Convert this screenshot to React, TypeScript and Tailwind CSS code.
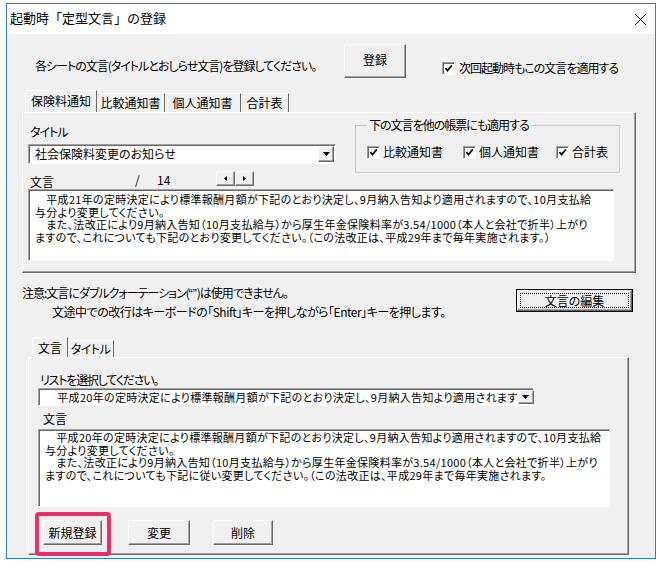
import React from 'react';

const raised =
  'border border-t-white border-l-white border-r-[#696969] border-b-[#696969] shadow-[inset_-1px_-1px_0_#a0a0a0] bg-[#f0f0f0]';
const sunken =
  'border border-t-[#a0a0a0] border-l-[#a0a0a0] border-r-white border-b-white shadow-[inset_1px_1px_0_#696969] bg-white';
const palt = "[font-feature-settings:'palt']";

const Check = () => (
  <span className={`w-[13px] h-[13px] flex items-center justify-center shrink-0 ${sunken}`}>
    <svg width="9" height="9" viewBox="0 0 9 9">
      <path d="M1.5 4 L3.5 6.5 L7.8 1.5" stroke="#000" strokeWidth="1.8" fill="none" />
    </svg>
  </span>
);

const DropBtn = () => (
  <span className={`w-[16px] h-full flex items-center justify-center shrink-0 ${raised}`}>
    <svg width="7" height="4" viewBox="0 0 7 4">
      <path d="M0 0h7L3.5 4z" fill="#000" />
    </svg>
  </span>
);

const Button = ({ label, className = '' }: { label: string; className?: string }) => (
  <div className={`flex items-center justify-center text-[12px] ${palt} ${raised} ${className}`}>{label}</div>
);

const upperText = [
  '\u3000平成21年の定時決定により標準報酬月額が下記のとおり決定し、9月納入告知より適用されますので、10月支払給',
  '与分より変更してください。',
  '\u3000また、法改正により9月納入告知（10月支払給与）から厚生年金保険料率が3.54/1000（本人と会社で折半）上がり',
  'ますので、これについても下記のとおり変更してください。（この法改正は、平成29年まで毎年実施されます。）',
];

const lowerText = [
  '\u3000平成20年の定時決定により標準報酬月額が下記のとおり決定し、9月納入告知より適用されますので、10月支払給',
  '与分より変更してください。',
  '\u3000また、法改正により9月納入告知（10月支払給与）から厚生年金保険料率が3.54/1000（本人と会社で折半）上がり',
  'ますので、これについても下記に従い変更してください。（この法改正は、平成29年まで毎年実施されます。',
];

const TextBox = ({ lines, className }: { lines: string[]; className: string }) => (
  <div className={`${sunken} ${className} pl-[6px] text-[11px] leading-[12.5px] tracking-[0.3px] ${palt} whitespace-nowrap overflow-hidden`}>
    {lines.map((l, i) => (
      <div key={i}>{l}</div>
    ))}
  </div>
);

export default function App() {
  return (
    <div className="w-[659px] h-[570px] bg-white pt-[3px] pl-[6px] font-['Noto_Sans_CJK_JP','Liberation_Sans',sans-serif] text-black">
      <div className="w-[650px] h-[556px] border border-[#2d7fd0] bg-[#f0f0f0] flex flex-col">
        {/* title bar */}
        <div className="h-[30px] bg-white flex items-center justify-between pl-[3px] pr-[9px] pb-[2px] shrink-0">
          <span className="text-[13px] leading-[16px]">起動時「定型文言」の登録</span>
          <svg width="11" height="11" viewBox="0 0 11 11" className="mt-[3px]">
            <path d="M0 0L11 11M11 0L0 11" stroke="#000" strokeWidth="1" />
          </svg>
        </div>

        {/* top row */}
        <div className="flex mt-[10px] h-[35px] text-[12px]">
          <div className={`ml-[28px] w-[309px] pt-[15px] leading-[14px] whitespace-nowrap tracking-[-1px] ${palt}`}>
            各シートの文言(タイトルとおしらせ文言)を登録してください。
          </div>
          <Button label="登録" className="w-[62px] h-[34px] pb-[3px]" />
          <div className={`ml-[36px] pt-[18px] flex items-start gap-[4px] leading-[14px] ${palt}`}>
            <Check />
            <span className="-mt-[1px] tracking-[-1px] whitespace-nowrap">次回起動時もこの文言を適用する</span>
          </div>
        </div>

        {/* upper tabs */}
        <div className="ml-[15px] mt-[11px] flex flex-col">
          <div className={`flex items-end ml-[3px] h-[22px] text-[12px] ${palt}`}>
            <div className="w-[72px] h-[22px] flex items-center justify-center border-l border-t border-white border-r border-r-[#696969] pb-[1px]">
              保険料通知
            </div>
            <div className="w-[68px] h-[19px] flex items-center justify-center border-r border-r-[#696969] border-t border-t-white">
              比較通知書
            </div>
            <div className="w-[76px] h-[19px] flex items-center justify-center border-r border-r-[#696969] border-t border-t-white">
              個人通知書
            </div>
            <div className="w-[48px] h-[19px] flex items-center justify-center border-r border-r-[#696969] border-t border-t-white">
              合計表
            </div>
          </div>
          <div className="w-[614px] h-[161px] border border-t-white border-l-white border-r-[#696969] border-b-[#696969] shadow-[inset_-1px_-1px_0_#a0a0a0] flex flex-col">
            <div className="flex h-[75px]">
              <div className={`ml-[5px] w-[308px] pt-[12px] flex flex-col text-[12px] ${palt}`}>
                <div className="h-[14px] leading-[14px] pl-[2px] tracking-[-1px]">タイトル</div>
                <div className={`mt-[5px] h-[20px] flex items-center ${sunken} p-[1px]`}>
                  <span className="flex-1 pl-[5px] leading-[16px]">社会保険料変更のお知らせ</span>
                  <DropBtn />
                </div>
                <div className="mt-[7px] h-[17px] flex items-center leading-[14px]">
                  <span className="pl-[2px] w-[107px] mt-[4px]">文言</span>
                  <span className="w-[22px]">/</span>
                  <span className="w-[59px]">14</span>
                  <div className="flex h-[15px] -mt-[2px]">
                    <span className={`w-[19px] h-full flex items-center justify-center ${raised}`}>
                      <svg width="3" height="5" viewBox="0 0 3 5">
                        <path d="M3 0v5L0 2.5z" fill="#000" />
                      </svg>
                    </span>
                    <span className={`w-[19px] h-full flex items-center justify-center ${raised}`}>
                      <svg width="3" height="5" viewBox="0 0 3 5">
                        <path d="M0 0v5L3 2.5z" fill="#000" />
                      </svg>
                    </span>
                  </div>
                </div>
              </div>
              <div className={`relative ml-[19px] mt-[12px] w-[265px] h-[48px] border border-[#c8c8c8] shadow-[1px_1px_0_white] text-[12px] ${palt}`}>
                <span className="absolute -top-[8px] left-[11px] px-[2px] bg-[#f0f0f0] leading-[14px] tracking-[-1px] whitespace-nowrap">
                  下の文言を他の帳票にも適用する
                </span>
                <div className="flex pt-[20px] pl-[11px] leading-[14px]">
                  <div className="w-[96px] flex items-start gap-[3px]">
                    <Check />
                    <span className="-mt-[1px]">比較通知書</span>
                  </div>
                  <div className="w-[93px] flex items-start gap-[3px]">
                    <Check />
                    <span className="-mt-[1px]">個人通知書</span>
                  </div>
                  <div className="flex items-start gap-[3px]">
                    <Check />
                    <span className="-mt-[1px]">合計表</span>
                  </div>
                </div>
              </div>
            </div>
            <TextBox lines={upperText} className="ml-[5px] mt-[1px] w-[586px] h-[72px] pt-[3px]" />
          </div>
        </div>

        {/* notes */}
        <div className={`flex mt-[11px] ml-[15px] text-[12px] ${palt}`}>
          <div className="w-[494px] leading-[18px] whitespace-nowrap">
            <div className="tracking-[-1px]">
              注意:文言にダブルクォーテーション(<span className="font-['Liberation_Sans',sans-serif] tracking-normal">“”</span>)は使用できません。
            </div>
            <div className="ml-[30px] tracking-[-0.5px]">文途中での改行はキーボードの「Shift」キーを押しながら「Enter」キーを押します。</div>
          </div>
          <div className="mt-[5px] w-[117px] h-[23px] border border-black">
            <div className={`w-full h-full p-[2px] ${raised}`}>
              <div className="w-full h-full border border-dotted border-black flex items-center justify-center leading-[14px]">
                文言の編集
              </div>
            </div>
          </div>
        </div>

        {/* lower tabs */}
        <div className="ml-[21px] mt-[16px] flex flex-col">
          <div className={`flex items-end ml-[4px] h-[20px] text-[12px] ${palt}`}>
            <div className="w-[36px] h-[20px] flex items-center justify-center border-l border-t border-white border-r border-r-[#696969]">
              文言
            </div>
            <div className="w-[46px] h-[17px] flex items-center justify-center border-r border-r-[#696969] border-t border-t-white tracking-[-0.5px]">
              タイトル
            </div>
          </div>
          <div className="w-[601px] h-[198px] border border-t-white border-l-white border-r-[#696969] border-b-[#696969] shadow-[inset_-1px_-1px_0_#a0a0a0] flex flex-col">
            <div className={`pt-[15px] ml-[11px] h-[14px] box-content leading-[14px] text-[12px] tracking-[-1.2px] ${palt}`}>
              リストを選択してください。
            </div>
            <div className={`ml-[9px] mt-[1px] w-[496px] h-[18px] flex items-center ${sunken} p-[1px] text-[11px] ${palt}`}>
              <span className="flex-1 pl-[6px] leading-[14px] tracking-[0.3px] whitespace-nowrap">
                {'\u3000平成20年の定時決定により標準報酬月額が下記のとおり決定し、9月納入告知より適用されます'}
              </span>
              <DropBtn />
            </div>
            <div className={`ml-[14px] mt-[6px] h-[14px] leading-[14px] text-[12px] ${palt}`}>文言</div>
            <TextBox lines={lowerText} className="ml-[9px] mt-[3px] w-[572px] h-[78px] pt-[1px]" />
            <div className="flex mt-[13px] h-[25px]">
              <div className="relative ml-[14px]">
                <Button label="新規登録" className="w-[59px] h-[25px]" />
                <div className="absolute -left-[8px] -top-[8px] -right-[9px] -bottom-[11px] border-4 border-[#ea2e6b] rounded-[4px]" />
              </div>
              <Button label="変更" className="ml-[26px] w-[62px] h-[25px]" />
              <Button label="削除" className="ml-[23px] w-[60px] h-[25px]" />
            </div>
          </div>
        </div>
      </div>
    </div>
  );
}
